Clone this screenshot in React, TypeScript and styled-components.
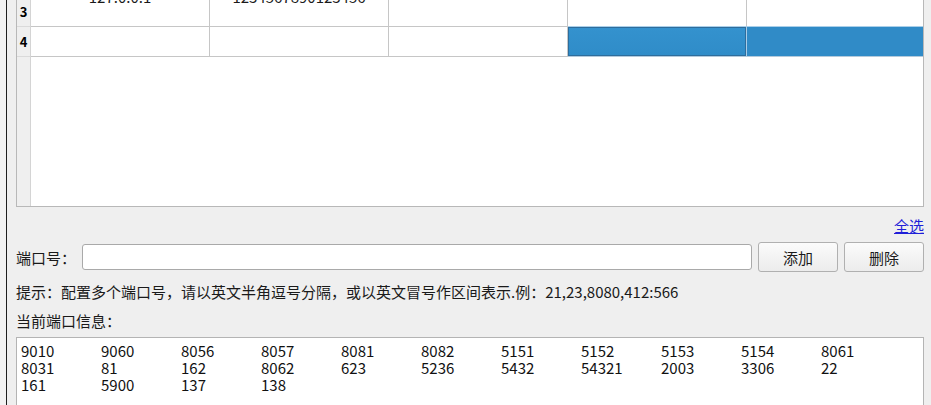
import React from 'react'
import styled, { createGlobalStyle, css } from 'styled-components'

const GlobalStyle = createGlobalStyle`
    html, body {
        margin: 0;
        padding: 0;
        background: #efefef;
        overflow: hidden;
    }
    body {
        font-family: "Noto Sans CJK SC", "Noto Sans", sans-serif;
        color: #1a1a1a;
    }
`

const Root = styled.div`
    display: flex;
    height: 405px;
    overflow: hidden;
    background: #efefef;
`

const OuterEdge = styled.div`
    width: 6px;
    background: #f2f2f2;
`

const Divider = styled.div`
    width: 1px;
    background: #1e1e1e;
`

const Panel = styled.div`
    flex: 1;
    min-width: 0;
    display: flex;
    flex-direction: column;
    padding: 0 7px 0 9px;
    font-size: 15px;
`

const TableFrame = styled.div`
    margin-top: -4px;
    height: 211px;
    box-sizing: border-box;
    border: 1px solid #b8b8b8;
    display: flex;
    background: #ffffff;
    flex-shrink: 0;
`

const VerticalHeader = styled.div`
    width: 14px;
    box-sizing: border-box;
    background: #efefef;
    border-right: 1px solid #d4d4d4;
    display: flex;
    flex-direction: column;
`

const HeaderCell = styled.div`
    height: 30px;
    box-sizing: border-box;
    border-bottom: 1px solid #dadada;
    display: flex;
    align-items: center;
    justify-content: center;
    font-size: 13px;
    font-weight: bold;
    color: #000;
`

const Grid = styled.div`
    flex: 1;
    display: grid;
    grid-template-columns: 179px 179px 179px 179px 1fr;
    grid-auto-rows: 30px;
    align-content: start;
`

interface CellProps {
    $selected?: boolean;
    $focus?: boolean;
    $last?: boolean;
}

const Cell = styled.div<CellProps>`
    box-sizing: border-box;
    border-right: ${(p) => (p.$last ? 'none' : '1px solid #c6c6c6')};
    border-bottom: 1px solid #c6c6c6;
    display: flex;
    justify-content: center;
    align-items: flex-start;
    overflow: hidden;
    ${(p) =>
        p.$selected &&
        css`
            background: #308bc7;
            border-top: 1px solid #aacfe9;
            margin-top: -1px;
            border-right-color: #a9cde8;
            border-bottom-color: #b3cadc;
        `}
    ${(p) =>
        p.$focus &&
        css`
            background: linear-gradient(#3492ce, #2f8cc8);
            box-shadow: inset 0 0 0 1px #2e6d9c;
        `}
`

const CutText = styled.span`
    display: block;
    margin-top: -8px;
    font-size: 15px;
    line-height: 15px;
    white-space: nowrap;
`

const LinkRow = styled.div`
    margin-top: 7px;
    height: 22px;
    display: flex;
    justify-content: flex-end;
    align-items: center;
`

const Link = styled.a`
    color: #1f1fd8;
    text-decoration: underline;
    cursor: pointer;
`

const FormRow = styled.div`
    margin-top: 6px;
    height: 30px;
    display: flex;
    align-items: center;
    gap: 6px;
`

const FieldLabel = styled.span`
    white-space: nowrap;
`

const PortInput = styled.input`
    flex: 1;
    min-width: 0;
    height: 26px;
    box-sizing: border-box;
    border: 1px solid #a9a9a9;
    border-radius: 3px;
    background: #ffffff;
    outline: none;
    padding: 0 4px;
    font: inherit;
`

const Button = styled.button`
    width: 80px;
    height: 30px;
    box-sizing: border-box;
    border: 1px solid #b0b0b0;
    border-radius: 3px;
    background: linear-gradient(#fbfbfb, #ececec);
    font: inherit;
    color: #1a1a1a;
    padding: 0;
`

const TextLine = styled.div<{ $gap: number }>`
    margin-top: ${(p) => p.$gap}px;
    height: 20px;
    line-height: 20px;
    white-space: nowrap;
`

const PortBox = styled.div`
    margin-top: 6px;
    flex: 1;
    box-sizing: border-box;
    border: 1px solid #b4b4b4;
    border-bottom: none;
    background: #ffffff;
    padding: 4px 4px;
`

const PortList = styled.div`
    display: grid;
    grid-template-columns: repeat(11, 80px);
    line-height: 17px;
    color: #111;
`

const rows = [
    { label: '3', cells: ['127.0.0.1', '1234567890123456', '', '', ''] },
    { label: '4', cells: ['', '', '', '', ''] },
]

const ports = [
    '9010', '9060', '8056', '8057', '8081', '8082', '5151', '5152', '5153', '5154', '8061',
    '8031', '81', '162', '8062', '623', '5236', '5432', '54321', '2003', '3306', '22',
    '161', '5900', '137', '138',
]

const App = () => {
    return (
        <>
            <GlobalStyle />
            <Root>
                <OuterEdge />
                <Divider />
                <Panel>
                    <TableFrame>
                        <VerticalHeader>
                            {rows.map((r) => (
                                <HeaderCell key={r.label}>{r.label}</HeaderCell>
                            ))}
                        </VerticalHeader>
                        <Grid>
                            {rows.map((r, ri) =>
                                r.cells.map((c, ci) => {
                                    const selected = ri === 1 && ci >= 3
                                    return (
                                        <Cell
                                            key={`${ri}-${ci}`}
                                            $last={ci === 4}
                                            $selected={selected}
                                            $focus={selected && ci === 3}
                                        >
                                            {c && <CutText>{c}</CutText>}
                                        </Cell>
                                    )
                                })
                            )}
                        </Grid>
                    </TableFrame>
                    <LinkRow>
                        <Link>全选</Link>
                    </LinkRow>
                    <FormRow>
                        <FieldLabel>端口号：</FieldLabel>
                        <PortInput />
                        <Button>添加</Button>
                        <Button>删除</Button>
                    </FormRow>
                    <TextLine $gap={10}>
                        提示：配置多个端口号，请以英文半角逗号分隔，或以英文冒号作区间表示.例：21,23,8080,412:566
                    </TextLine>
                    <TextLine $gap={9}>当前端口信息：</TextLine>
                    <PortBox>
                        <PortList>
                            {ports.map((p, i) => (
                                <span key={i}>{p}</span>
                            ))}
                        </PortList>
                    </PortBox>
                </Panel>
            </Root>
        </>
    )
}

export default App
